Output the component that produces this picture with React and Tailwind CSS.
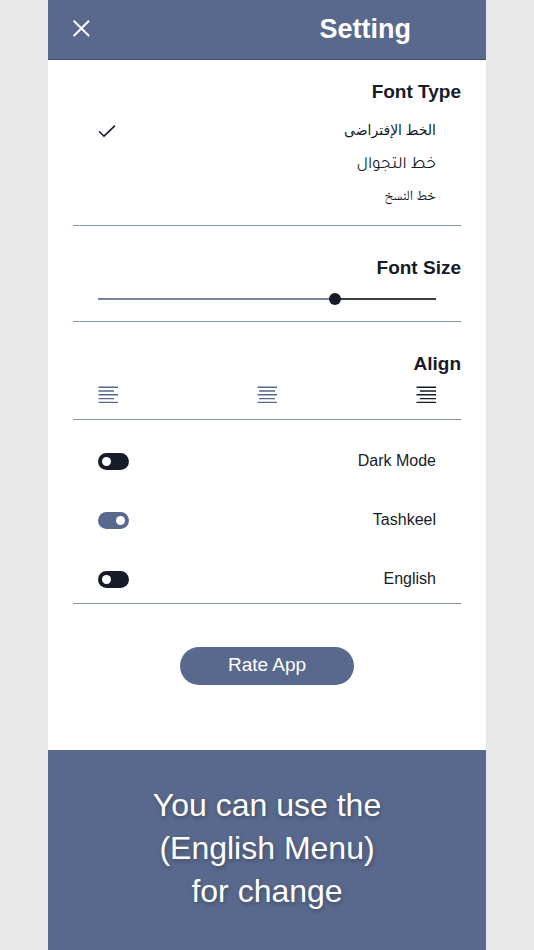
import { useState } from "react";

const FONT_TYPES = [
  {
    id: "default",
    label: "الخط الإفتراضى",
    className: "font-['Liberation_Serif','DejaVu_Sans',serif] text-sm",
  },
  {
    id: "tajawal",
    label: "خط التجوال",
    className: "font-['Tajawal','DejaVu_Sans',sans-serif] text-[17px] pt-1",
  },
  {
    id: "naskh",
    label: "خط النسخ",
    className: "font-['Noto_Naskh_Arabic','DejaVu_Sans',serif] text-sm",
  },
];

// start and end of the short lines in each icon
const ALIGNMENTS = [
  { id: "left", label: "Align left", from: 0, to: 16 },
  { id: "center", label: "Align center", from: 2, to: 18 },
  { id: "right", label: "Align right", from: 4, to: 20 },
];

function Section({ title, children }) {
  return (
    <section className="border-b border-[#8490ad] pt-7 first:pt-[18px]">
      <h2 className="text-right text-[19px] leading-7 font-bold">{title}</h2>
      {children}
    </section>
  );
}

function AlignIcon({ from, to }) {
  return (
    <svg
      viewBox="0 0 20 18"
      className="h-[18px] w-5"
      fill="none"
      stroke="currentColor"
      strokeWidth="1.4"
    >
      <path d={`M0.5 1.2H20M${from || 0.5} 5H${to}M0.5 8.8H20M${from || 0.5} 12.6H${to}M0.5 16.4H20`} />
    </svg>
  );
}

function SwitchRow({ label, checked, onChange }) {
  return (
    <label className="flex h-6 items-center justify-between text-base">
      <input
        type="checkbox"
        role="switch"
        checked={checked}
        onChange={(event) => onChange(event.target.checked)}
        className="flex h-[17px] w-[31px] appearance-none items-center rounded-full bg-[#171b28] px-1 before:size-[9px] before:rounded-full before:bg-white checked:justify-end checked:bg-[#59698d]"
      />
      <span>{label}</span>
    </label>
  );
}

export default function App() {
  const [fontType, setFontType] = useState("default");
  const [fontSize, setFontSize] = useState(71);
  const [align, setAlign] = useState("right");
  const [darkMode, setDarkMode] = useState(false);
  const [tashkeel, setTashkeel] = useState(true);
  const [english, setEnglish] = useState(false);

  return (
    <div className="min-h-screen bg-[#e8e8e8] px-12 font-['Liberation_Sans',Arial,sans-serif] text-[#171b28]">
      <div className="flex min-h-screen flex-col bg-white">
        <header className="flex h-[60px] items-center justify-between border-b border-[#3f4e75] bg-[#59698d] pr-[75px] pb-0.5 pl-6 text-white">
          <button type="button" aria-label="Close">
            <svg
              viewBox="0 0 18 18"
              className="size-[18px]"
              fill="none"
              stroke="currentColor"
              strokeWidth="2"
              strokeLinecap="round"
            >
              <path d="M2.2 1.2L16.5 15.5M16.5 1.2L2.2 15.5" />
            </svg>
          </button>
          <h1 className="text-[27px] leading-8 font-bold">Setting</h1>
        </header>

        <main className="flex flex-1 flex-col px-[25px]">
          <Section title="Font Type">
            <div className="px-[25px] pt-2 pb-3" role="radiogroup" aria-label="Font Type">
              {FONT_TYPES.map((font) => (
                <label
                  key={font.id}
                  className="flex h-[33px] items-center justify-between"
                >
                  <input
                    type="radio"
                    name="font-type"
                    value={font.id}
                    checked={fontType === font.id}
                    onChange={() => setFontType(font.id)}
                    className="peer sr-only"
                  />
                  <svg
                    viewBox="0 0 18 14"
                    className="invisible h-3.5 w-[18px] peer-checked:visible"
                    fill="none"
                    stroke="currentColor"
                    strokeWidth="1.6"
                    strokeLinecap="round"
                  >
                    <path d="M1.5 7.8L6 12.2L16.5 2.2" />
                  </svg>
                  <span dir="rtl" lang="ar" className={font.className}>
                    {font.label}
                  </span>
                </label>
              ))}
            </div>
          </Section>

          <Section title="Font Size">
            <div className="flex px-[25px] pt-[11px] pb-4">
              <input
                type="range"
                aria-label="Font Size"
                min="0"
                max="100"
                value={fontSize}
                onChange={(event) => setFontSize(Number(event.target.value))}
                style={{
                  backgroundImage: `linear-gradient(to right, #7683a2 ${fontSize}%, #3c404b ${fontSize}%)`,
                }}
                className="h-3 w-full appearance-none bg-[length:100%_2px] bg-center bg-no-repeat [&::-webkit-slider-thumb]:size-3 [&::-webkit-slider-thumb]:appearance-none [&::-webkit-slider-thumb]:rounded-full [&::-webkit-slider-thumb]:bg-[#171b28]"
              />
            </div>
          </Section>

          <Section title="Align">
            <div className="flex justify-between px-[25px] pt-2 pb-[15px]">
              {ALIGNMENTS.map((item) => (
                <button
                  key={item.id}
                  type="button"
                  aria-label={item.label}
                  aria-pressed={align === item.id}
                  onClick={() => setAlign(item.id)}
                  className={align === item.id ? "text-[#171b28]" : "text-[#59698d]"}
                >
                  <AlignIcon from={item.from} to={item.to} />
                </button>
              ))}
            </div>
          </Section>

          <div className="flex flex-col gap-[35px] border-b border-[#8490ad] px-[25px] pt-[29px] pb-3">
            <SwitchRow label="Dark Mode" checked={darkMode} onChange={setDarkMode} />
            <SwitchRow label="Tashkeel" checked={tashkeel} onChange={setTashkeel} />
            <SwitchRow label="English" checked={english} onChange={setEnglish} />
          </div>

          <button
            type="button"
            className="mt-[43px] mb-15 self-center rounded-full bg-[#59698d] px-12 pt-1 pb-1.5 text-[19px] leading-7 text-white"
          >
            Rate App
          </button>
        </main>

        <footer className="bg-[#59698d] px-6 pt-[34px] pb-[37px] text-center text-[32px] leading-[43px] text-white [text-shadow:1px_2px_4px_rgb(0_0_0/0.3)]">
          <p>
            You can use the
            <br />
            (English Menu)
            <br />
            for change
          </p>
        </footer>
      </div>
    </div>
  );
}
